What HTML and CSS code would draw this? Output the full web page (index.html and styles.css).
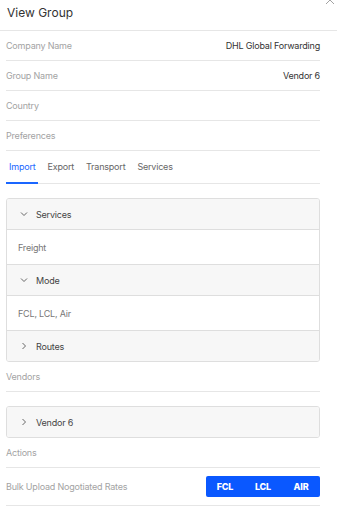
FILE: index.html
```html
<!DOCTYPE html>
<html lang="en">
<head>
    <meta charset="UTF-8">
    <meta name="viewport" content="width=device-width, initial-scale=1.0">
    <title>View Group</title>
    <link rel="stylesheet" href="styles.css">
</head>
<body>
    <div class="modal">
        <header class="modal-header">
            <h1>View Group</h1>
            <svg class="close" width="10" height="10" viewBox="0 0 10 10"><path d="M1 1 L9 9 M9 1 L1 9" stroke="#999" stroke-width="0.9" fill="none"/></svg>
        </header>
        <div class="modal-body">
            <div class="row">
                <span class="label">Company Name</span>
                <span class="value">DHL Global Forwarding</span>
            </div>
            <div class="row">
                <span class="label">Group Name</span>
                <span class="value">Vendor 6</span>
            </div>
            <div class="row">
                <span class="label">Country</span>
            </div>
            <div class="row">
                <span class="label">Preferences</span>
            </div>

            <nav class="tabs">
                <a class="tab active" href="#">Import</a>
                <a class="tab" href="#">Export</a>
                <a class="tab" href="#">Transport</a>
                <a class="tab" href="#">Services</a>
            </nav>

            <div class="accordion">
                <div class="acc-head">
                    <svg class="chev" width="8" height="8" viewBox="0 0 8 8"><path d="M1 2.5 L4 5.5 L7 2.5" fill="none" stroke="#555" stroke-width="0.9"/></svg>
                    Services
                </div>
                <div class="acc-content">Freight</div>
                <div class="acc-head">
                    <svg class="chev" width="8" height="8" viewBox="0 0 8 8"><path d="M1 2.5 L4 5.5 L7 2.5" fill="none" stroke="#555" stroke-width="0.9"/></svg>
                    Mode
                </div>
                <div class="acc-content">FCL, LCL, Air</div>
                <div class="acc-head last">
                    <svg class="chev" width="8" height="8" viewBox="0 0 8 8"><path d="M2.5 1 L5.5 4 L2.5 7" fill="none" stroke="#555" stroke-width="0.9"/></svg>
                    Routes
                </div>
            </div>

            <div class="row">
                <span class="label">Vendors</span>
            </div>

            <div class="accordion">
                <div class="acc-head last">
                    <svg class="chev" width="8" height="8" viewBox="0 0 8 8"><path d="M2.5 1 L5.5 4 L2.5 7" fill="none" stroke="#555" stroke-width="0.9"/></svg>
                    Vendor 6
                </div>
            </div>

            <div class="row">
                <span class="label">Actions</span>
            </div>
            <div class="row tall">
                <span class="label">Bulk Upload Nogotiated Rates</span>
                <div class="btn-group">
                    <button class="btn">FCL</button>
                    <button class="btn">LCL</button>
                    <button class="btn">AIR</button>
                </div>
            </div>
        </div>
    </div>
</body>
</html>
```

FILE: styles.css
```css
body {
    margin: 0;
    padding: 0;
    background-color: #fff;
    font-family: Inter, "Liberation Sans", sans-serif;
    letter-spacing: -0.2px;
    color: #333;
}
.modal {
    position: relative;
    width: 337px;
}
.modal-header {
    height: 31px;
    border-bottom: 1px solid #e6e6e6;
    padding-left: 7px;
    box-sizing: border-box;
}
.modal-header h1 {
    margin: 0;
    padding-top: 5px;
    font-size: 12px;
    font-weight: 400;
    line-height: 16px;
    letter-spacing: 0;
    color: #333;
}
.close {
    position: absolute;
    top: -5px;
    right: 2px;
}
.modal-body {
    padding: 0 17px 0 6px;
}
.row {
    display: flex;
    justify-content: space-between;
    align-items: center;
    height: 30px;
    border-bottom: 1px solid #e6e6e6;
    box-sizing: border-box;
    font-size: 9px;
}
.row.tall {
    height: 38px;
}
.label {
    color: #a3a3a3;
}
.value {
    color: #333;
}
.tabs {
    display: flex;
    gap: 6px;
    height: 33px;
    border-bottom: 1px solid #e6e6e6;
    box-sizing: border-box;
}
.tab {
    display: flex;
    align-items: center;
    padding: 0 3px;
    font-size: 9px;
    color: #666;
    text-decoration: none;
    border-bottom: 2px solid transparent;
    margin-bottom: -1px;
}
.tab.active {
    color: #1a66ff;
    border-bottom-color: #1a66ff;
}
.accordion {
    margin-top: 14px;
    border: 1px solid #dedede;
    border-radius: 3px;
    overflow: hidden;
}
.acc-head {
    display: flex;
    align-items: center;
    height: 31px;
    padding-left: 13px;
    background-color: #f7f7f7;
    border-bottom: 1px solid #dedede;
    box-sizing: border-box;
    font-size: 9px;
    color: #444;
}
.acc-head.last {
    border-bottom: none;
    height: 30px;
}
.chev {
    margin-right: 8px;
}
.acc-content {
    display: flex;
    align-items: center;
    height: 35px;
    padding-left: 11px;
    border-bottom: 1px solid #dedede;
    box-sizing: border-box;
    font-size: 9px;
    color: #777;
}
.btn-group {
    display: flex;
    border-radius: 2px;
    overflow: hidden;
}
.btn {
    width: 38px;
    height: 21px;
    border: none;
    padding: 0;
    background-color: #0a58ff;
    color: #fff;
    font-family: Inter, "Liberation Sans", sans-serif;
    font-size: 9px;
    font-weight: 800;
    letter-spacing: -0.2px;
}
```
